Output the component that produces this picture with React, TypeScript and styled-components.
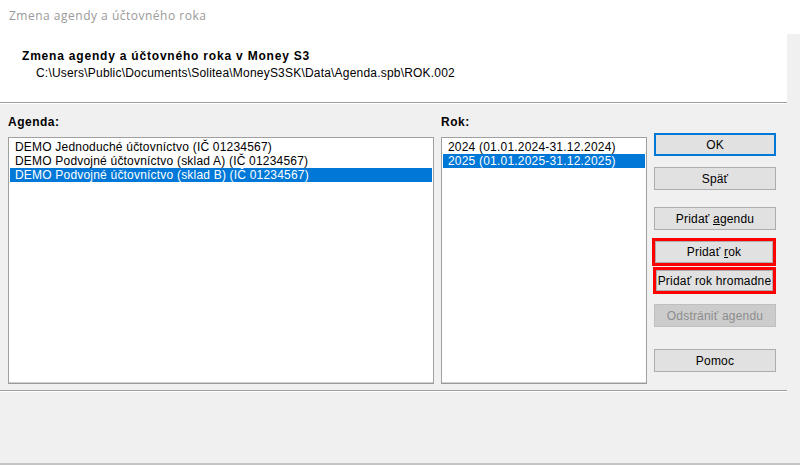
import styled, { createGlobalStyle } from "styled-components";

const GlobalStyle = createGlobalStyle`
  html, body {
    margin: 0;
    padding: 0;
    background: #f0f0f0;
  }
  body {
    font-family: "Liberation Sans", Arial, sans-serif;
    font-size: 12px;
    letter-spacing: 0.2px;
    color: #000;
  }
  #root {
    width: 800px;
    height: 465px;
    overflow: hidden;
  }
`;

const agendas = [
  "DEMO Jednoduché účtovníctvo (IČ 01234567)",
  "DEMO Podvojné účtovníctvo (sklad A) (IČ 01234567)",
  "DEMO Podvojné účtovníctvo (sklad B) (IČ 01234567)",
];

const years = ["2024 (01.01.2024-31.12.2024)", "2025 (01.01.2025-31.12.2025)"];

export default function App() {
  return (
    <>
      <GlobalStyle />
      <Window>
        <TitleBar>Zmena agendy a účtovného roka</TitleBar>
        <Content>
          <Header>
            <HeaderTitle>Zmena agendy a účtovného roka v Money S3</HeaderTitle>
            <HeaderPath>
              C:\Users\Public\Documents\Solitea\MoneyS3SK\Data\Agenda.spb\ROK.002
            </HeaderPath>
          </Header>
          <Separator />
          <Main>
            <Column>
              <Label>Agenda:</Label>
              <ListBox>
                {agendas.map((a, i) => (
                  <ListItem key={a} $selected={i === 2}>
                    {a}
                  </ListItem>
                ))}
              </ListBox>
            </Column>
            <Column>
              <Label>Rok:</Label>
              <ListBox>
                {years.map((y, i) => (
                  <ListItem key={y} $selected={i === 1}>
                    {y}
                  </ListItem>
                ))}
              </ListBox>
            </Column>
            <ButtonColumn>
              <Button $default>OK</Button>
              <Button $top={11}>Späť</Button>
              <Button $top={17}>
                Pridať <Key>a</Key>gendu
              </Button>
              <Highlight $top={8} $h={28} $shift={2}>
                <Button>
                  Pridať <Key>r</Key>ok
                </Button>
              </Highlight>
              <Highlight $top={1} $h={27} $shift={1}>
                <Button>Pridať rok hromadne</Button>
              </Highlight>
              <Button $top={10} disabled>
                Odstrániť agendu
              </Button>
              <Button $top={22}>Pomoc</Button>
            </ButtonColumn>
          </Main>
          <Separator />
        </Content>
      </Window>
    </>
  );
}

const Window = styled.div`
  width: 800px;
  height: 465px;
  box-sizing: border-box;
  background: #f0f0f0;
  border-bottom: 2px solid #c4c4c4;
  display: flex;
  flex-direction: column;
`;

const TitleBar = styled.div`
  height: 34px;
  box-sizing: border-box;
  background: #fff;
  padding: 8px 0 0 9px;
  font-family: "Open Sans", "Liberation Sans", sans-serif;
  font-size: 12px;
  letter-spacing: 0.5px;
  line-height: 16px;
  color: #9a9a9a;
`;

const Content = styled.div`
  width: 787px;
  display: flex;
  flex-direction: column;
`;

const Header = styled.div`
  height: 68px;
  box-sizing: border-box;
  background: #fff;
  padding: 15px 0 0 22px;
  display: flex;
  flex-direction: column;
  gap: 3px;
`;

const HeaderTitle = styled.div`
  font-weight: bold;
  font-size: 12px;
  letter-spacing: 0.8px;
  line-height: 14px;
`;

const HeaderPath = styled.div`
  padding-left: 14px;
  line-height: 14px;
`;

const Separator = styled.div`
  height: 1px;
  background: #a0a0a0;
  border-bottom: 1px solid #fff;
`;

const Main = styled.div`
  display: grid;
  grid-template-columns: 426px 206px 122px;
  column-gap: 7px;
  padding: 11px 11px 6px 8px;
`;

const Column = styled.div`
  display: flex;
  flex-direction: column;
  gap: 8px;
`;

const Label = styled.div`
  font-weight: bold;
  letter-spacing: 0.5px;
  line-height: 14px;
`;

const ListBox = styled.div`
  height: 247px;
  box-sizing: border-box;
  background: #fff;
  border: 1px solid #a0a0a0;
  border-bottom-color: #9a9a9a;
  box-shadow: inset 0 -1px 0 #d0d0d0;
  padding: 2px 1px;
`;

const ListItem = styled.div<{ $selected?: boolean }>`
  height: 14px;
  line-height: 14px;
  padding-left: 5px;
  white-space: nowrap;
  background: ${(p) => (p.$selected ? "#0078d7" : "transparent")};
  color: ${(p) => (p.$selected ? "#fff" : "#000")};
`;

const ButtonColumn = styled.div`
  display: flex;
  flex-direction: column;
  padding-top: 18px;
`;

const Button = styled.button<{ $default?: boolean; $top?: number }>`
  height: 23px;
  width: 100%;
  flex: none;
  box-sizing: border-box;
  margin: ${(p) => p.$top ?? 0}px 0 0 0;
  padding: 0;
  background: #e1e1e1;
  border: ${(p) => (p.$default ? "2px solid #0078d7" : "1px solid #adadad")};
  border-radius: 0;
  font-family: "Liberation Sans", Arial, sans-serif;
  font-size: 12px;
  letter-spacing: 0.2px;
  color: #000;
  white-space: nowrap;

  &:disabled {
    background: #cccccc;
    border-color: #bfbfbf;
    color: #8c8c8c;
  }
`;

const Highlight = styled.div<{ $top: number; $h: number; $shift: number }>`
  margin: ${(p) => p.$top}px 0 0 -${(p) => p.$shift}px;
  width: calc(100% + ${(p) => p.$shift}px);
  height: ${(p) => p.$h}px;
  box-sizing: border-box;
  border: 3px solid #ff0000;
  display: flex;
  align-items: center;

  & > button {
    height: 100%;
  }
`;

const Key = styled.span`
  text-decoration: underline;
`;
